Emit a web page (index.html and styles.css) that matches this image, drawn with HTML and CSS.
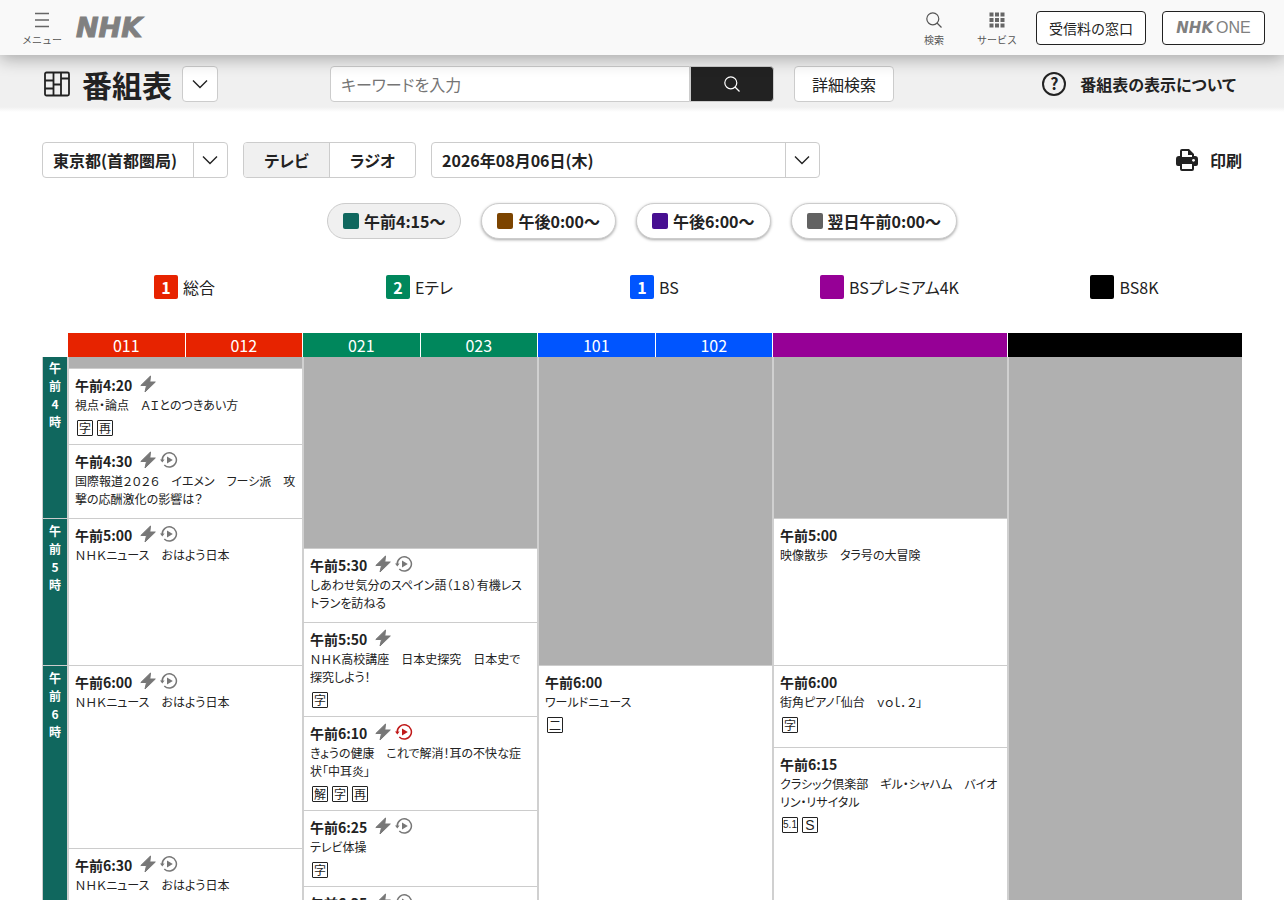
FILE: index.html
```html
<!DOCTYPE html>
<html lang="ja">
<head>
  <meta charset="UTF-8">
  <meta name="viewport" content="width=device-width, initial-scale=1.0">
  <title>番組表 - NHK</title>
  <link rel="stylesheet" href="styles.css">
</head>
<body>
  <svg class="defs" aria-hidden="true">
    <symbol id="chevron" viewBox="0 0 16 10">
      <path d="M1 1.5l7 7 7-7" fill="none" stroke="#222" stroke-width="1.4"/>
    </symbol>
    <symbol id="search" viewBox="0 0 16 16">
      <circle cx="6.8" cy="6.8" r="6" fill="none" stroke="currentColor" stroke-width="1.2"/>
      <path d="M11 11l4.5 4.5" stroke="currentColor" stroke-width="1.3"/>
    </symbol>
    <symbol id="bolt" viewBox="0 0 16 18">
      <path d="M10.5 1L.8 10.5h5.7L5 17 15.3 7H9.8z" fill="#777" stroke="#777" stroke-linejoin="round"/>
    </symbol>
    <symbol id="replay" viewBox="0 0 18 16">
      <path d="M2.2 8A7.1 7.1 0 1 1 4.3 13" fill="none" stroke="currentColor" stroke-width="1.5"/>
      <path d="M0 7.4h4.6L2.3 10.6z M7 4.6v6.8L12.8 8z" fill="currentColor"/>
    </symbol>
  </svg>

  <header class="site-header">
    <button class="icon-button" type="button">
      <svg width="16" height="16" viewBox="0 0 16 16"><path d="M1 1.5h14M1 8h14M1 14.5h14" stroke="#666" stroke-width="1.5"/></svg>
      メニュー
    </button>
    <a class="logo" href="#">NHK</a>
    <nav class="site-nav">
      <button class="icon-button" type="button">
        <svg width="16" height="16"><use href="#search"/></svg>
        検索
      </button>
      <button class="icon-button" type="button">
        <svg width="16" height="16" viewBox="0 0 16 16" fill="#666">
          <path d="M.5 .5h4v4h-4zM6 .5h4v4H6zM11.5 .5h4v4h-4zM.5 6h4v4h-4zM6 6h4v4H6zM11.5 6h4v4h-4zM.5 11.5h4v4h-4zM6 11.5h4v4H6zM11.5 11.5h4v4h-4z"/>
        </svg>
        サービス
      </button>
      <a class="header-link" href="#">受信料の窓口</a>
      <a class="header-link one" href="#"><span class="logo-small">NHK</span>ONE</a>
    </nav>
  </header>

  <div class="title-bar">
    <div class="title">
      <svg width="26" height="26" viewBox="0 0 26 26" fill="none" stroke="#222" stroke-width="1.8">
        <rect x="1" y="1.5" width="24" height="23" rx="1.5"/>
        <path d="M9.5 1.5v23M17 1.5v23M1 9.5h8.5M1 17.5h8.5M9.5 13.5H17M17 7.5h8"/>
      </svg>
      <h1>番組表</h1>
      <button class="box square" type="button" aria-label="番組表メニュー"><svg width="16" height="10"><use href="#chevron"/></svg></button>
    </div>
    <form class="search">
      <input class="search-input" type="text" placeholder="キーワードを入力" aria-label="キーワード">
      <button class="search-button" type="button" aria-label="検索"><svg width="16" height="16"><use href="#search"/></svg></button>
    </form>
    <button class="box detail" type="button">詳細検索</button>
    <a class="help" href="#"><span class="help-mark">?</span>番組表の表示について</a>
  </div>

  <main>
    <div class="filters">
      <div class="box select region">
        <select aria-label="地域"><option>東京都(首都圏局)</option></select>
        <span class="arrow"><svg width="16" height="10"><use href="#chevron"/></svg></span>
      </div>
      <div class="box media">
        <button class="current" type="button">テレビ</button>
        <button type="button">ラジオ</button>
      </div>
      <div class="box select date">
        <select aria-label="日付"><option>2026年08月06日(木)</option></select>
        <span class="arrow"><svg width="16" height="10"><use href="#chevron"/></svg></span>
      </div>
      <button class="print" type="button">
        <svg width="22" height="22" viewBox="0 0 22 22">
          <path d="M4 7V2q0-2 2-2h7l5 5v2h1q3 0 3 3v5q0 2-2 2h-2v3q0 2-2 2H6q-2 0-2-2v-3H2q-2 0-2-2v-5q0-3 3-3h1z" fill="#222"/>
          <path d="M6 8V2h6v4h4v2zM6 15h10v5H6z" fill="#fff"/>
          <circle cx="17.5" cy="11.3" r="1.4" fill="#fff"/>
        </svg>
        印刷
      </button>
    </div>

    <div class="periods">
      <button class="period current" type="button"><i class="swatch morning"></i>午前4:15〜</button>
      <button class="period" type="button"><i class="swatch noon"></i>午後0:00〜</button>
      <button class="period" type="button"><i class="swatch evening"></i>午後6:00〜</button>
      <button class="period" type="button"><i class="swatch night"></i>翌日午前0:00〜</button>
    </div>

    <div class="channels">
      <div class="channel"><b class="g1">1</b>総合</div>
      <div class="channel"><b class="e1">2</b>Eテレ</div>
      <div class="channel"><b class="bs">1</b>BS</div>
      <div class="channel"><b class="bs4k"></b>BSプレミアム4K</div>
      <div class="channel"><b class="bs8k"></b>BS8K</div>
    </div>

    <div class="timetable">
      <table>
        <colgroup><col class="hour-col"><col span="5"></colgroup>
        <thead>
          <tr>
            <td></td>
            <th><div class="numbers g1"><span>011</span><span>012</span></div></th>
            <th><div class="numbers e1"><span>021</span><span>023</span></div></th>
            <th><div class="numbers bs"><span>101</span><span>102</span></div></th>
            <th><div class="numbers bs4k"></div></th>
            <th><div class="numbers bs8k"></div></th>
          </tr>
        </thead>
        <tbody>
          <tr class="t0415">
            <th class="hour" rowspan="3">午<br>前<br>4<br>時</th>
            <td class="off"></td>
            <td class="off" rowspan="4"></td>
            <td class="off" rowspan="6"></td>
            <td class="off" rowspan="3"></td>
            <td class="off" rowspan="12"></td>
          </tr>
          <tr class="t0420">
            <td>
              <div class="time">午前4:20<svg class="bolt"><use href="#bolt"/></svg></div>
              <p>視点・論点　ＡＩとのつきあい方</p>
              <div class="marks"><span>字</span><span>再</span></div>
            </td>
          </tr>
          <tr class="t0430">
            <td>
              <div class="time">午前4:30<svg class="bolt"><use href="#bolt"/></svg><svg class="replay"><use href="#replay"/></svg></div>
              <p>国際報道２０２６　イエメン　フーシ派　攻撃の応酬激化の影響は？</p>
            </td>
          </tr>
          <tr class="t0500">
            <th class="hour" rowspan="3">午<br>前<br>5<br>時</th>
            <td rowspan="3">
              <div class="time">午前5:00<svg class="bolt"><use href="#bolt"/></svg><svg class="replay"><use href="#replay"/></svg></div>
              <p>ＮＨＫニュース　おはよう日本</p>
            </td>
            <td rowspan="3">
              <div class="time">午前5:00</div>
              <p>映像散歩　タラ号の大冒険</p>
            </td>
          </tr>
          <tr class="t0530">
            <td>
              <div class="time">午前5:30<svg class="bolt"><use href="#bolt"/></svg><svg class="replay"><use href="#replay"/></svg></div>
              <p>しあわせ気分のスペイン語（１８）有機レストランを訪ねる</p>
            </td>
          </tr>
          <tr class="t0550">
            <td rowspan="2">
              <div class="time">午前5:50<svg class="bolt"><use href="#bolt"/></svg></div>
              <p>ＮＨＫ高校講座　日本史探究　日本史で探究しよう！</p>
              <div class="marks"><span>字</span></div>
            </td>
          </tr>
          <tr class="t0600">
            <th class="hour" rowspan="6">午<br>前<br>6<br>時</th>
            <td rowspan="4">
              <div class="time">午前6:00<svg class="bolt"><use href="#bolt"/></svg><svg class="replay"><use href="#replay"/></svg></div>
              <p>ＮＨＫニュース　おはよう日本</p>
            </td>
            <td rowspan="6">
              <div class="time">午前6:00</div>
              <p>ワールドニュース</p>
              <div class="marks"><span>二</span></div>
            </td>
            <td rowspan="2">
              <div class="time">午前6:00</div>
              <p>街角ピアノ「仙台　ｖｏｌ．２」</p>
              <div class="marks"><span>字</span></div>
            </td>
          </tr>
          <tr class="t0610">
            <td rowspan="2">
              <div class="time">午前6:10<svg class="bolt"><use href="#bolt"/></svg><svg class="replay live"><use href="#replay"/></svg></div>
              <p>きょうの健康　これで解消！耳の不快な症状「中耳炎」</p>
              <div class="marks"><span>解</span><span>字</span><span>再</span></div>
            </td>
          </tr>
          <tr class="t0615">
            <td rowspan="4">
              <div class="time">午前6:15</div>
              <p>クラシック倶楽部　ギル・シャハム　バイオリン・リサイタル</p>
              <div class="marks latin"><span class="narrow">5.1</span><span>S</span></div>
            </td>
          </tr>
          <tr class="t0625">
            <td rowspan="2">
              <div class="time">午前6:25<svg class="bolt"><use href="#bolt"/></svg><svg class="replay"><use href="#replay"/></svg></div>
              <p>テレビ体操</p>
              <div class="marks"><span>字</span></div>
            </td>
          </tr>
          <tr class="t0630">
            <td rowspan="2">
              <div class="time">午前6:30<svg class="bolt"><use href="#bolt"/></svg><svg class="replay"><use href="#replay"/></svg></div>
              <p>ＮＨＫニュース　おはよう日本</p>
            </td>
          </tr>
          <tr class="t0635">
            <td>
              <div class="time">午前6:35<svg class="bolt"><use href="#bolt"/></svg><svg class="replay"><use href="#replay"/></svg></div>
            </td>
          </tr>
        </tbody>
      </table>
    </div>
  </main>
</body>
</html>
```
FILE: styles.css
```css
:root {
  --text: #222;
  --line: #ccc;
  --green: #10675e;
}

* {
  box-sizing: border-box;
}

body {
  margin: 0;
  height: 100vh;
  display: flex;
  flex-direction: column;
  overflow: hidden;
  background: #fff;
  color: var(--text);
  font-family: "Noto Sans CJK JP", sans-serif;
  font-size: 16px;
  font-feature-settings: "palt";
}

button, input, select {
  margin: 0;
  padding: 0;
  border: 0;
  background: none;
  color: inherit;
  font: inherit;
  font-feature-settings: inherit;
}

button {
  cursor: pointer;
}

a {
  color: inherit;
  text-decoration: none;
}

svg {
  display: block;
}

.defs {
  position: absolute;
  width: 0;
  height: 0;
}

/* header */
.site-header {
  position: relative;
  z-index: 2;
  flex: none;
  display: flex;
  align-items: center;
  height: 55px;
  padding: 0 19px 0 22px;
  background: #f9f9f9;
  box-shadow: 0 4px 16px rgba(0, 0, 0, 0.3);
  font-feature-settings: normal;
}

.icon-button {
  display: flex;
  flex-direction: column;
  align-items: center;
  gap: 4px;
  width: 40px;
  padding-top: 4px;
  color: #555;
  font-size: 10px;
  line-height: 15px;
  white-space: nowrap;
}

.logo, .logo-small {
  color: #808080;
  font-family: "DejaVu Sans", sans-serif;
  font-weight: bold;
  font-style: italic;
}

.logo {
  margin-left: 14px;
  font-size: 27px;
  -webkit-text-stroke: 1px #808080;
  stroke-linejoin: round;
}

.logo-small {
  font-size: 15px;
}

.site-nav {
  display: flex;
  align-items: center;
  margin-left: auto;
}

.site-nav .icon-button {
  margin-right: 23px;
}

.site-nav .icon-button + .header-link {
  margin-left: -4px;
}

.header-link {
  display: flex;
  align-items: center;
  justify-content: center;
  width: 110px;
  height: 34px;
  border: 1px solid #222;
  border-radius: 4px;
  background: #fff;
  font-size: 14px;
}

.header-link.one {
  width: 103px;
  margin-left: 16px;
  gap: 3px;
  color: #808080;
  font-family: "Liberation Sans", sans-serif;
  font-size: 16px;
}

/* title and keyword search */
.title-bar {
  flex: none;
  display: flex;
  align-items: center;
  height: 57px;
  padding: 0 48px 0 42px;
  background: linear-gradient(#f0f0f0 52px, #fff);
}

.title {
  display: flex;
  align-items: center;
  width: 288px;
  padding-left: 2px;
}

h1 {
  margin: 0 10px 0 12px;
  font-size: 30px;
  line-height: 36px;
}

.box {
  height: 36px;
  border: 1px solid var(--line);
  border-radius: 4px;
  background: #fff;
}

.square {
  display: flex;
  align-items: center;
  justify-content: center;
  width: 36px;
}

.search {
  display: flex;
  width: 444px;
  margin-right: 20px;
}

.search-input {
  flex: 1;
  min-width: 0;
  height: 36px;
  padding: 0 10px;
  border: 1px solid var(--line);
  border-radius: 4px 0 0 4px;
  background: #fff;
}

.search-input::placeholder {
  color: #757575;
}

.search-button {
  display: flex;
  align-items: center;
  justify-content: center;
  width: 84px;
  border: 1px solid var(--line);
  border-radius: 0 4px 4px 0;
  background: #222;
  color: #fff;
}

.detail {
  width: 100px;
}

.help {
  display: flex;
  align-items: center;
  gap: 14px;
  margin-left: auto;
  font-weight: bold;
}

.help-mark {
  width: 24px;
  height: 24px;
  border: 2px solid #222;
  border-radius: 50%;
  line-height: 19px;
  text-align: center;
}

/* filters */
main {
  flex: 1;
  min-height: 0;
  display: flex;
  flex-direction: column;
  padding: 30px 42px 0;
}

.filters {
  flex: none;
  display: flex;
  gap: 15px;
  font-weight: bold;
}

.select {
  display: flex;
}

.select select {
  flex: 1;
  min-width: 0;
  padding: 0 10px;
  appearance: none;
}

.region {
  width: 186px;
}

.date {
  width: 389px;
}

.arrow {
  display: flex;
  align-items: center;
  justify-content: center;
  width: 34px;
  padding-right: 2px;
  border-left: 1px solid var(--line);
}

.media {
  display: flex;
  width: 173px;
  overflow: hidden;
}

.media button {
  flex: 1;
}

.media .current {
  border-right: 1px solid var(--line);
  background: #f0f0f0;
}

.print {
  display: flex;
  align-items: center;
  gap: 12px;
  margin-left: auto;
}

.periods {
  flex: none;
  display: flex;
  justify-content: center;
  gap: 20px;
  margin-top: 25px;
}

.period {
  display: flex;
  align-items: center;
  gap: 5px;
  height: 36px;
  padding: 0 15px;
  border: 1px solid var(--line);
  border-radius: 18px;
  background: #fff;
  box-shadow: 0 1px 3px rgba(0, 0, 0, 0.35);
  font-weight: bold;
}

.period.current {
  background: #f0f0f0;
  box-shadow: none;
}

.swatch {
  width: 16px;
  height: 16px;
  border-radius: 2px;
}

.morning { background: #10675e; }
.noon { background: #7c4400; }
.evening { background: #470f91; }
.night { background: #626262; }

.g1 { background: #e72300; }
.e1 { background: #00875c; }
.bs { background: #0055ff; }
.bs4k { background: #960096; }
.bs8k { background: #000; }

.channels {
  flex: none;
  display: flex;
  margin-top: 36px;
  padding-left: 25px;
}

.channel {
  flex: 1;
  display: flex;
  align-items: center;
  justify-content: center;
  gap: 5px;
  line-height: 24px;
}

.channel b {
  width: 24px;
  height: 24px;
  border-radius: 2px;
  color: #fff;
  text-align: center;
}

/* timetable */
.timetable {
  flex: 1;
  min-height: 0;
  margin-top: 34px;
  overflow: hidden;
}

table {
  width: 100%;
  table-layout: fixed;
  border-collapse: separate;
  border-spacing: 0;
}

.hour-col {
  width: 25px;
}

th, td {
  padding: 0;
  vertical-align: top;
}

thead th {
  border-left: 1px solid #fff;
  font-weight: normal;
}

.numbers {
  display: flex;
  height: 24px;
  color: #fff;
  line-height: 25px;
}

.numbers span {
  flex: 1;
}

.numbers span + span {
  border-left: 1px solid #fff;
}

tbody td {
  padding: 6px 6px 7px;
  border-top: 1px solid var(--line);
  border-left: 2px solid #d0d0d0;
}

tbody .off {
  padding: 0;
  border-top: 0;
  background: #b0b0b0;
}

.hour {
  padding-top: 3px;
  border-top: 1px solid var(--line);
  border-left: 1px solid var(--line);
  background: var(--green);
  color: #fff;
  font-size: 12px;
  line-height: 18px;
}

.t0415 .hour {
  padding-top: 2px;
  border-top: 0;
}

.t0415 { height: 11px; }
.t0420 { height: 76px; }
.t0430 { height: 74px; }
.t0500 { height: 30px; }
.t0530 { height: 74px; }
.t0550 { height: 43px; }
.t0600 { height: 51px; }
.t0610 { height: 31px; }
.t0615 { height: 63px; }
.t0625 { height: 38px; }
.t0630 { height: 38px; }
.t0635 { height: 76px; }

.time {
  display: flex;
  height: 21px;
  font-size: 14px;
  font-weight: bold;
  line-height: 20px;
}

.bolt {
  width: 16px;
  height: 18px;
  margin-left: 8px;
}

.replay {
  width: 18px;
  height: 16px;
  margin: 1px 0 0 4px;
  color: #777;
}

.live {
  color: #c01818;
}

p {
  margin: 0;
  font-size: 12px;
  line-height: 18px;
}

.marks {
  display: flex;
  gap: 4px;
  margin: 6px 0 0 2px;
}

.marks span {
  width: 16px;
  height: 16px;
  border: 1px solid #222;
  border-radius: 1px;
  font-size: 12px;
  line-height: 14px;
  text-align: center;
}

.latin span {
  font-family: "Liberation Sans", sans-serif;
  font-size: 14px;
}

.latin .narrow {
  font-size: 10px;
}
```
